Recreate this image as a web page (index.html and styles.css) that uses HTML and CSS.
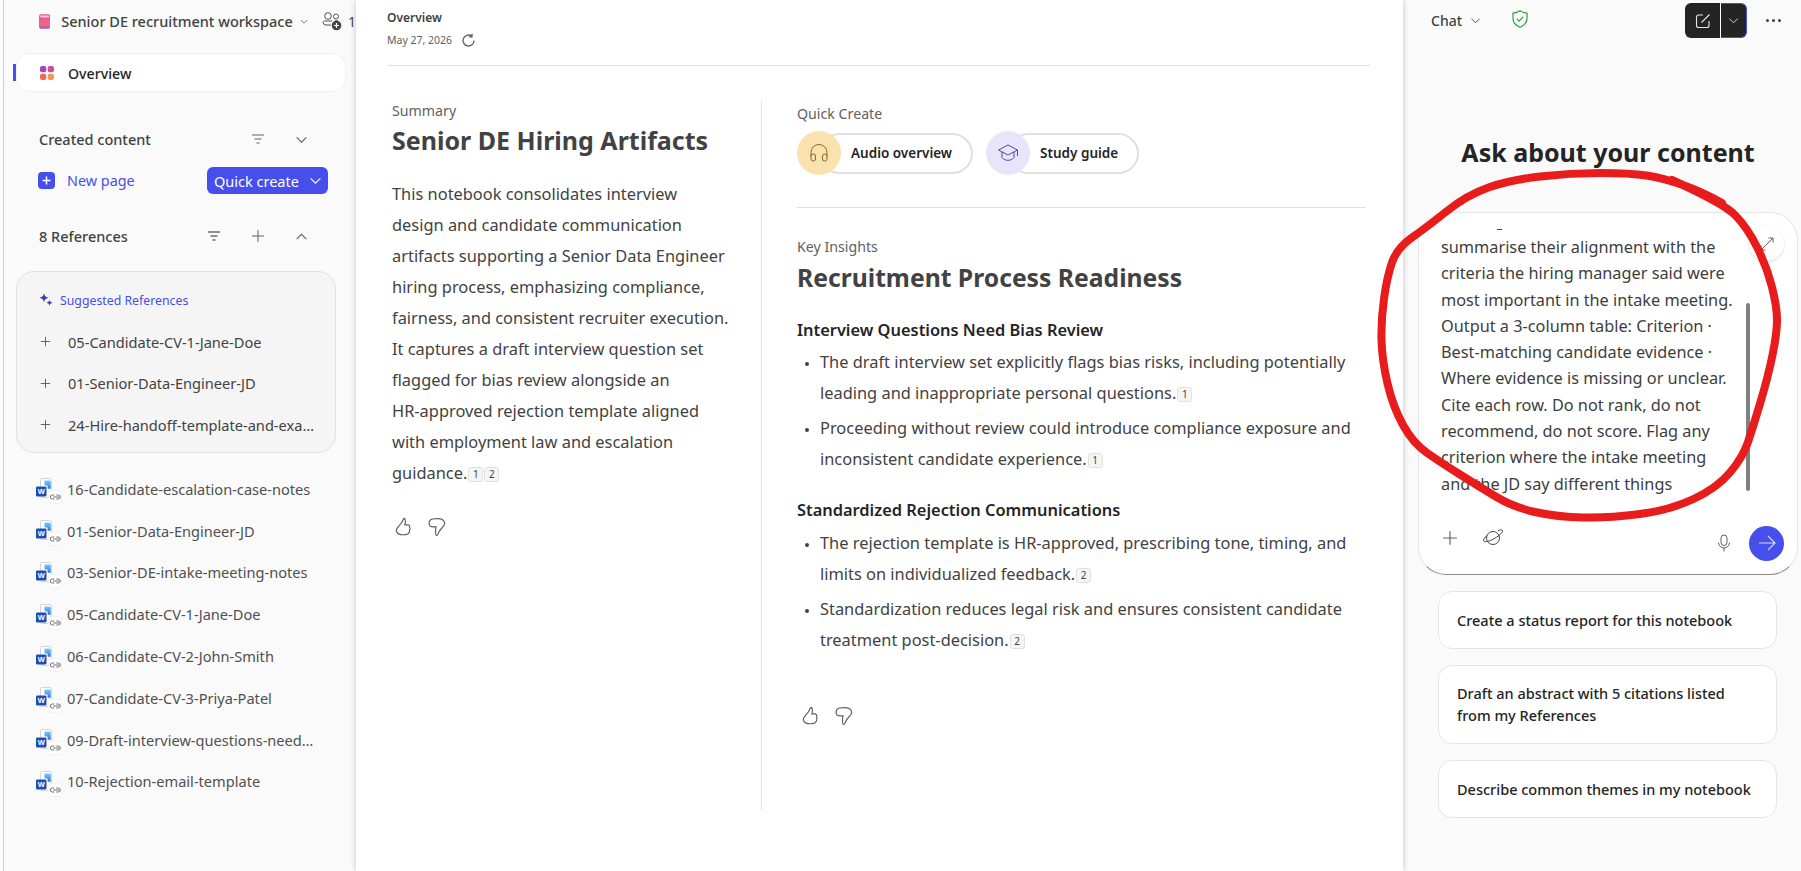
FILE: index.html
```html
<!DOCTYPE html>
<html lang="en">
<head>
    <meta charset="UTF-8">
    <meta name="viewport" content="width=device-width, initial-scale=1.0">
    <title>Senior DE recruitment workspace</title>
    <link rel="stylesheet" href="styles.css">
</head>
<body>
    <svg width="0" height="0" class="defs">
        <defs>
            <linearGradient id="bookFill" x1="0" y1="0" x2="0" y2="1">
                <stop offset="0" stop-color="#f04f9a"/>
                <stop offset="0.75" stop-color="#f0697a"/>
                <stop offset="1" stop-color="#8a55d8"/>
            </linearGradient>
            <linearGradient id="cornerFill" x1="0" y1="0" x2="0" y2="1">
                <stop offset="0" stop-color="#6fd0fb"/>
                <stop offset="1" stop-color="#2f6fe8"/>
            </linearGradient>
            <symbol id="chevDown" viewBox="0 0 12 12"><path d="M1.500 4 6 8.500 10.500 4" fill="none" stroke="currentColor" stroke-width="1"/></symbol>
            <symbol id="chevUp" viewBox="0 0 12 12"><path d="M1.500 8.500 6 4l4.500 4.500" fill="none" stroke="currentColor" stroke-width="1"/></symbol>
            <symbol id="filter" viewBox="0 0 12 10"><path d="M0 1h12M2.500 5h7M4.500 9h3" fill="none" stroke="currentColor" stroke-width="1"/></symbol>
            <symbol id="plus" viewBox="0 0 14 14"><path d="M7 1v12M1 7h12" fill="none" stroke="currentColor" stroke-width="1"/></symbol>
            <symbol id="thumbUp" viewBox="0 0 20 20"><path d="M10.200 2.200c-1.300-.4-1.500 1-1.900 2.100-.6 1.700-1.800 3.200-3.600 5.200-1.800 1.900-3 3-2.400 5 .6 2.200 3.200 3.400 6.700 3.400 2.300 0 4.500-.2 5.200-2 .6-.5.8-1.500.5-2.200.7-.7.7-2.100.1-2.800.5-1.300-.5-2.400-1.700-2.400h-2.800c.6-1.700.8-5.400-.1-5.300z" fill="none" stroke="currentColor" stroke-width="1.100"/></symbol>
            <symbol id="thumbDown" viewBox="0 0 20 20"><path d="M9.800 18.500c1.300.3 1.500-1 1.900-2.100.6-1.700 1.800-3.200 3.600-5.200 1.800-1.900 3-3 2.400-5-.6-2.200-3.200-3.700-6.700-3.700-2.600 0-6 0-7 1.500-1 1.400-1.300 3.800-.5 5.100.8 1.200 2.400 1.300 4 1.300h2c-.6 1.800-.6 7.900.3 8.100z" fill="none" stroke="currentColor" stroke-width="1.100"/></symbol>
            <symbol id="wordDoc" viewBox="0 0 26 26">
                <path d="M4.500 1.500A1.500 1.500 0 0 1 6 .5h7.500A2 2 0 0 1 15.500 2.500v15a2 2 0 0 1-2 2H6a1.500 1.500 0 0 1-1.500-1.500z" fill="#fff" stroke="#c8c8c8" stroke-width=".8"/>
                <path d="M8.500 2.500h5a1.200 1.200 0 0 1 1.200 1.200v7h-1.700c-1 0-1.500-.5-1.500-1.500V7.500H10c-1 0-1.500-.5-1.500-1.500z" fill="url(#cornerFill)"/>
                <rect x="0" y="8.500" width="10.500" height="10" rx="1.300" fill="#1b4fb5"/>
                <text x="5.200" y="16.300" class="w-mark">W</text>
                <rect x="12.500" y="12.500" width="13" height="13" rx="2.500" fill="#fff" stroke="#ececec" stroke-width=".7"/>
                <path d="M18 17h-2a2 2 0 0 0 0 4h2M20 17h2a2 2 0 0 1 0 4h-2M16.800 19h6.400" transform="translate(.3 0)" fill="none" stroke="#616161" stroke-width=".9"/>
            </symbol>
        </defs>
    </svg>

    <div class="app">
        <aside class="sidebar">
            <div class="workspace">
                <svg class="book" viewBox="0 0 14 18" width="15" height="19">
                    <rect width="14" height="18" rx="2.500" fill="url(#bookFill)"/>
                    <rect x="1.500" y="1.500" width="11" height="2.500" rx="1" fill="#fbc4d8"/>
                </svg>
                <span class="workspace-name">Senior DE recruitment workspace</span>
                <svg class="workspace-chev"><use href="#chevDown"/></svg>
                <svg class="people" viewBox="0 0 20 20" width="20" height="20">
                    <circle cx="6" cy="5" r="3.300" fill="none" stroke="#555" stroke-width="1"/>
                    <circle cx="14" cy="5.500" r="2.500" fill="none" stroke="#555" stroke-width="1"/>
                    <path d="M9 14H4a3 3 0 0 1-3-2.500c0-1 .8-1.500 1.800-1.500H10M13 9.800h3" fill="none" stroke="#555" stroke-width="1"/>
                    <circle cx="14.500" cy="14.500" r="4.800" fill="#444"/>
                    <path d="M14.500 12v5M12 14.500h5" stroke="#fff" stroke-width="1.200"/>
                </svg>
                <span class="people-count">1</span>
            </div>

            <div class="nav-item">
                <svg viewBox="0 0 14 14" width="14" height="14">
                    <rect width="6.300" height="6.300" rx="2" fill="#a943b9"/>
                    <rect x="7.700" width="6.300" height="6.300" rx="2" fill="#c4509e"/>
                    <rect y="7.700" width="6.300" height="6.300" rx="2" fill="#ee6a5c"/>
                    <rect x="7.700" y="7.700" width="6.300" height="6.300" rx="2" fill="#f4965c"/>
                </svg>
                <span>Overview</span>
            </div>

            <div class="section-head created">
                <span class="section-title">Created content</span>
                <span class="slot"><svg class="icon-filter"><use href="#filter"/></svg></span>
                <span class="slot"><svg class="icon-chev"><use href="#chevDown"/></svg></span>
            </div>

            <div class="create-row">
                <span class="new-box"><svg width="9" height="9" viewBox="0 0 9 9"><path d="M4.500 .5v8M.5 4.500h8" stroke="#fff" stroke-width="1.500"/></svg></span>
                <span class="new-page">New page</span>
                <button class="quick-btn">Quick create <svg class="icon-chev"><use href="#chevDown"/></svg></button>
            </div>

            <div class="section-head references">
                <span class="section-title">8 References</span>
                <span class="slot"><svg class="icon-filter strong"><use href="#filter"/></svg></span>
                <span class="slot"><svg class="icon-plus"><use href="#plus"/></svg></span>
                <span class="slot"><svg class="icon-chev"><use href="#chevUp"/></svg></span>
            </div>

            <div class="suggested">
                <div class="suggested-head">
                    <svg width="14" height="14" viewBox="0 0 14 14"><path d="M5 0c.5 3 1.500 4 4.500 4.700C6.500 5.500 5.500 6.500 5 9.500 4.500 6.500 3.500 5.500.5 4.700 3.500 4 4.500 3 5 0zM10.500 6.500c.3 2 1 2.800 3.200 3.200-2.200.4-2.900 1.200-3.200 3.300-.3-2.100-1-2.900-3.200-3.300 2.200-.4 2.900-1.200 3.200-3.200z" fill="#3b3fb8"/></svg>
                    <span>Suggested References</span>
                </div>
                <div class="suggested-row"><svg class="icon-add"><use href="#plus"/></svg><span class="file-name">05-Candidate-CV-1-Jane-Doe</span></div>
                <div class="suggested-row"><svg class="icon-add"><use href="#plus"/></svg><span class="file-name">01-Senior-Data-Engineer-JD</span></div>
                <div class="suggested-row"><svg class="icon-add"><use href="#plus"/></svg><span class="file-name">24-Hire-handoff-template-and-exa…</span></div>
            </div>

            <ul class="ref-list">
                <li><svg class="doc"><use href="#wordDoc"/></svg><span class="file-name">16-Candidate-escalation-case-notes</span></li>
                <li><svg class="doc"><use href="#wordDoc"/></svg><span class="file-name">01-Senior-Data-Engineer-JD</span></li>
                <li><svg class="doc"><use href="#wordDoc"/></svg><span class="file-name">03-Senior-DE-intake-meeting-notes</span></li>
                <li><svg class="doc"><use href="#wordDoc"/></svg><span class="file-name">05-Candidate-CV-1-Jane-Doe</span></li>
                <li><svg class="doc"><use href="#wordDoc"/></svg><span class="file-name">06-Candidate-CV-2-John-Smith</span></li>
                <li><svg class="doc"><use href="#wordDoc"/></svg><span class="file-name">07-Candidate-CV-3-Priya-Patel</span></li>
                <li><svg class="doc"><use href="#wordDoc"/></svg><span class="file-name">09-Draft-interview-questions-need…</span></li>
                <li><svg class="doc"><use href="#wordDoc"/></svg><span class="file-name">10-Rejection-email-template</span></li>
            </ul>
        </aside>

        <main class="main">
            <header class="main-head">
                <div class="page-title">Overview</div>
                <div class="page-date">
                    <span>May 27, 2026</span>
                    <svg width="15" height="15" viewBox="0 0 15 15"><path d="M13 7.500A5.500 5.500 0 1 1 10.500 2.900M11 .8v3h-3" fill="none" stroke="#616161" stroke-width="1.300"/></svg>
                </div>
            </header>

            <div class="columns">
                <section class="summary">
                    <div class="eyebrow">Summary</div>
                    <h1>Senior DE Hiring Artifacts</h1>
                    <p class="summary-text">This notebook consolidates interview<br>
                    design and candidate communication<br>
                    artifacts supporting a Senior Data Engineer<br>
                    hiring process, emphasizing compliance,<br>
                    fairness, and consistent recruiter execution.<br>
                    It captures a draft interview question set<br>
                    flagged for bias review alongside an<br>
                    HR-approved rejection template aligned<br>
                    with employment law and escalation<br>
                    guidance.<span class="cite">1</span><span class="cite">2</span></p>
                    <div class="thumbs first"><svg><use href="#thumbUp"/></svg><svg><use href="#thumbDown"/></svg></div>
                </section>

                <section class="insights">
                    <div class="quick">
                        <div class="eyebrow">Quick Create</div>
                        <div class="chips">
                            <div class="chip">
                                <span class="chip-icon audio">
                                    <svg width="20" height="20" viewBox="0 0 20 20"><path d="M2 13V9.500a8 8 0 0 1 16 0V13" fill="none" stroke="#8a6420" stroke-width="1"/><rect x="2" y="11" width="4.500" height="7" rx="2" fill="none" stroke="#8a6420"/><rect x="13.500" y="11" width="4.500" height="7" rx="2" fill="none" stroke="#8a6420"/></svg>
                                </span>
                                <span class="chip-label">Audio overview</span>
                            </div>
                            <div class="chip">
                                <span class="chip-icon study">
                                    <svg width="22" height="20" viewBox="0 0 22 20"><path d="M11 2 1.500 7 11 12l9.500-5zM5 9v5.500c1.500 2 3.800 2.800 6 2.800s4.500-.8 6-2.800V9M20.500 7v6" fill="none" stroke="#4f4a9e" stroke-width="1"/></svg>
                                </span>
                                <span class="chip-label">Study guide</span>
                            </div>
                        </div>
                    </div>

                    <div class="eyebrow key">Key Insights</div>
                    <h1>Recruitment Process Readiness</h1>

                    <h3 class="first-topic">Interview Questions Need Bias Review</h3>
                    <ul class="points">
                        <li>The draft interview set explicitly flags bias risks, including potentially<br>leading and inappropriate personal questions.<span class="cite">1</span></li>
                        <li>Proceeding without review could introduce compliance exposure and<br>inconsistent candidate experience.<span class="cite">1</span></li>
                    </ul>

                    <h3 class="second-topic">Standardized Rejection Communications</h3>
                    <ul class="points">
                        <li>The rejection template is HR-approved, prescribing tone, timing, and<br>limits on individualized feedback.<span class="cite">2</span></li>
                        <li>Standardization reduces legal risk and ensures consistent candidate<br>treatment post-decision.<span class="cite">2</span></li>
                    </ul>
                    <div class="thumbs second"><svg><use href="#thumbUp"/></svg><svg><use href="#thumbDown"/></svg></div>
                </section>
            </div>
        </main>

        <aside class="chat">
            <div class="chat-bar">
                <span class="chat-label">Chat</span>
                <svg class="chat-chev"><use href="#chevDown"/></svg>
                <svg class="shield" viewBox="0 0 16 18" width="16" height="18"><path d="M8 .8c2 1.500 4 2.200 7 2.400v5.300c0 4-2.500 6.800-7 8.700-4.500-1.900-7-4.700-7-8.700V3.200C4 3 6 2.300 8 .8z" fill="none" stroke="#2f9e3f" stroke-width="1.200"/><path d="m4.800 8.800 2.300 2.300 4.200-4.500" fill="none" stroke="#2f9e3f" stroke-width="1.100"/></svg>
                <div class="new-chat">
                    <span class="new-chat-main">
                        <svg width="16" height="16" viewBox="0 0 16 16"><path d="M8 2H3.500A2 2 0 0 0 1.500 4v8.500a2 2 0 0 0 2 2H12a2 2 0 0 0 2-2V8M6.500 9.500 14.500 1.500" fill="none" stroke="#e6e6e6" stroke-width="1.100"/></svg>
                    </span>
                    <span class="new-chat-menu"><svg width="11" height="11"><use href="#chevDown"/></svg></span>
                </div>
                <span class="more"><i></i><i></i><i></i></span>
            </div>

            <h2 class="chat-title">Ask about your content</h2>

            <div class="prompt">
                <div class="prompt-text">
                    <div class="clip-mark"></div>
                    summarise their alignment with the<br>
                    criteria the hiring manager said were<br>
                    most important in the intake meeting.<br>
                    Output a 3-column table: Criterion ·<br>
                    Best-matching candidate evidence ·<br>
                    Where evidence is missing or unclear.<br>
                    Cite each row. Do not rank, do not<br>
                    recommend, do not score. Flag any<br>
                    criterion where the intake meeting<br>
                    and the JD say different things
                </div>
                <span class="scrollbar"></span>
                <span class="expand">
                    <svg width="14" height="14" viewBox="0 0 14 14"><path d="M8.500 1H13v4.500M13 1 1 13M1 8.500V13h4.500" fill="none" stroke="#616161" stroke-width="1"/></svg>
                </span>
                <div class="prompt-tools">
                    <svg class="tool-plus"><use href="#plus"/></svg>
                    <svg class="tool-planet" viewBox="0 0 22 18" width="22" height="18"><circle cx="11" cy="9" r="6.500" fill="none" stroke="#424242" stroke-width="1"/><path d="M5 6.500C2.500 8.500 1 10.500 1.800 12c1 1.500 6 .3 11-2.700s8.500-6.300 7.700-7.800c-.5-1-2.500-.9-4.700.2" fill="none" stroke="#424242" stroke-width="1"/></svg>
                    <svg class="tool-mic" viewBox="0 0 14 18" width="14" height="18"><rect x="4" y="1" width="6" height="10.500" rx="3" fill="none" stroke="#616161" stroke-width="1"/><path d="M1.500 8.500a5.500 5.500 0 0 0 11 0M7 14v3.500" fill="none" stroke="#616161" stroke-width="1"/></svg>
                    <span class="send"><svg width="18" height="16" viewBox="0 0 18 16"><path d="M1 8h16M10 1l7 7-7 7" fill="none" stroke="#d9d9ff" stroke-width="1.100"/></svg></span>
                </div>
            </div>

            <div class="suggestions">
                <div class="suggestion">Create a status report for this notebook</div>
                <div class="suggestion two-line">Draft an abstract with 5 citations listed<br>from my References</div>
                <div class="suggestion">Describe common themes in my notebook</div>
            </div>
        </aside>
    </div>

    <svg class="scribble" width="1801" height="871" viewBox="0 0 1801 871">
        <path d="M1672 180Q1723 203 1735 215Q1747 227 1757 247Q1767 267 1772 287Q1777 307 1777 320Q1777 333 1772.500 355Q1768 377 1760.500 402Q1753 427 1748 442Q1743 457 1730 472.500Q1717 488 1693.500 499Q1670 510 1640 514Q1610 518 1583.500 517.500Q1557 517 1535 512Q1513 507 1496.500 497Q1480 487 1460 474.500Q1440 462 1426.500 452.500Q1413 443 1403 425Q1393 407 1387.500 383.500Q1382 360 1381.500 340Q1381 320 1384 298.500Q1387 277 1392 262.500Q1397 248 1412 237.500Q1427 227 1447 211Q1467 195 1488.500 187.500Q1510 180 1540 176.500Q1570 173 1600 173Q1630 173 1646.500 175.500Q1663 178 1683 185Q1703 192 1722 203" fill="none" stroke="#e81c1c" stroke-width="8" stroke-linecap="round"/>
    </svg>
</body>
</html>
```

FILE: styles.css
```css
* {
    box-sizing: border-box;
}
html, body {
    margin: 0;
    padding: 0;
    height: 100%;
    overflow: hidden;
}
body {
    font-family: "Noto Sans", "Open Sans", sans-serif;
    background-color: #fff;
    color: #424242;
    position: relative;
}
.defs {
    position: absolute;
}
.w-mark {
    font-family: "Liberation Sans", sans-serif;
    font-size: 7.5px;
    font-weight: 700;
    fill: #fff;
    text-anchor: middle;
}
.app {
    display: flex;
    height: 871px;
    padding-left: 3px;
}

/* left rail */
.sidebar {
    width: 353px;
    flex: none;
    background-color: #fafafa;
    border-left: 1px solid #d1d1d1;
    overflow: hidden;
}
.workspace {
    display: flex;
    align-items: center;
    height: 42px;
    padding-left: 35px;
    white-space: nowrap;
}
.workspace-name {
    margin-left: 11px;
    font-size: 14.5px;
    font-weight: 500;
}
.workspace-chev {
    width: 11px;
    height: 11px;
    margin-left: 7px;
    color: #424242;
}
.people {
    margin-left: 14px;
    flex: none;
}
.people-count {
    margin-left: 6px;
    font-size: 14px;
}
.nav-item {
    position: relative;
    display: flex;
    align-items: center;
    width: 330px;
    height: 39px;
    margin: 11px 0 0 12px;
    padding: 1px 0 0 23px;
    background: #fff;
    border: 1px solid #f0f0f0;
    border-radius: 14px;
    color: #242424;
    font-size: 14.2px;
    font-weight: 500;
}
.nav-item span {
    margin-left: 14px;
}
.nav-item::before {
    content: "";
    position: absolute;
    left: -4px;
    top: 10px;
    width: 3px;
    height: 17px;
    background: #464feb;
}
.section-head {
    display: flex;
    align-items: center;
    height: 24px;
    padding: 0 33px 0 35px;
}
.section-title {
    flex: 1;
    font-size: 14.5px;
    font-weight: 500;
}
.slot {
    display: flex;
    justify-content: center;
    width: 43.5px;
    color: #616161;
}
.created {
    margin-top: 35px;
}
.references {
    margin-top: 30px;
}
.icon-filter {
    width: 12px;
    height: 10px;
}
.icon-filter.strong {
    color: #242424;
}
.icon-chev {
    width: 13px;
    height: 13px;
}
.icon-plus {
    width: 14px;
    height: 14px;
}
.create-row {
    display: flex;
    align-items: center;
    height: 27px;
    margin-top: 16px;
    padding-left: 34px;
}
.new-box {
    display: flex;
    align-items: center;
    justify-content: center;
    width: 17px;
    height: 17px;
    background: #464feb;
    border-radius: 4px;
}
.new-page {
    margin-left: 12px;
    font-size: 14.4px;
    color: #464feb;
}
.quick-btn {
    display: flex;
    align-items: center;
    justify-content: space-between;
    width: 121px;
    height: 27px;
    margin-left: auto;
    margin-right: 28px;
    padding: 0 6px 0 7px;
    background: #464feb;
    border: 0;
    border-radius: 6px;
    color: #fff;
    font-family: inherit;
    font-size: 14.5px;
    white-space: nowrap;
}
.suggested {
    width: 320px;
    height: 182px;
    margin: 23px 0 0 12px;
    padding: 19px 0 0 22px;
    background: #f5f5f5;
    border: 1px solid #e0e0e0;
    border-radius: 18px;
}
.suggested-head {
    display: flex;
    align-items: center;
    height: 18px;
    font-size: 12.3px;
    color: #464feb;
}
.suggested-head span {
    margin-left: 7px;
}
.suggested-row {
    display: flex;
    align-items: center;
    height: 41.5px;
    white-space: nowrap;
}
.suggested-head + .suggested-row {
    margin-top: 12px;
}
.icon-add {
    width: 11px;
    height: 11px;
    margin-left: 1px;
    margin-right: 17px;
    color: #424242;
}
.file-name {
    font-size: 14.6px;
    white-space: nowrap;
}
.ref-list {
    list-style: none;
    margin: 15px 0 0;
    padding: 0 0 0 32px;
}
.ref-list li {
    display: flex;
    align-items: center;
    height: 41.8px;
}
.ref-list .file-name {
    margin-left: 5px;
    color: #505050;
}
.doc {
    width: 26px;
    height: 26px;
    flex: none;
    margin-top: 5px;
}

/* center */
.main {
    position: relative;
    z-index: 1;
    width: 1047px;
    flex: none;
    padding: 0 33px 0 31px;
    background: #fff;
    box-shadow: 0 0 6px rgba(0, 0, 0, 0.22);
}
.main-head {
    height: 66px;
    padding-top: 10px;
    border-bottom: 1px solid #e0e0e0;
}
.page-title {
    font-size: 12px;
    font-weight: 600;
    line-height: 16px;
}
.page-date {
    display: flex;
    align-items: center;
    gap: 9px;
    margin-top: 6px;
    font-size: 10.5px;
    line-height: 16px;
    color: #616161;
}
.columns {
    display: flex;
    margin-top: 35px;
    height: 709px;
}
.summary {
    width: 375px;
    flex: none;
    padding: 1px 0 0 5px;
    border-right: 1px solid #e0e0e0;
}
.eyebrow {
    font-size: 14.2px;
    line-height: 18px;
    color: #616161;
}
h1 {
    margin: 4px 0 0;
    font-size: 25px;
    font-weight: 700;
    line-height: 32px;
    color: #424242;
}
.insights h1 {
    margin-top: 6px;
    font-size: 24.7px;
}
.summary-text {
    margin: 22px 0 0;
    font-size: 16.4px;
    line-height: 31px;
}
.cite {
    display: inline-block;
    width: 15px;
    height: 15px;
    margin-left: 1px;
    background: #f5f5f5;
    border: 1px solid #e0e0e0;
    border-radius: 3px;
    font-size: 10px;
    line-height: 13px;
    text-align: center;
    vertical-align: 1px;
}
.thumbs {
    display: flex;
    gap: 11px;
    color: #616161;
}
.thumbs svg {
    width: 21px;
    height: 21px;
}
.thumbs.first {
    margin: 28px 0 0 2px;
}
.thumbs.second {
    margin: 50px 0 0 4px;
}
.insights {
    flex: 1;
    padding: 4px 0 0 35px;
}
.quick {
    margin-right: 4px;
    padding-bottom: 32px;
    border-bottom: 1px solid #e0e0e0;
}
.chips {
    display: flex;
    gap: 13px;
    margin-top: 8px;
}
.chip {
    display: flex;
    align-items: center;
}
.chip-icon {
    position: relative;
    z-index: 1;
    display: flex;
    align-items: center;
    justify-content: center;
    width: 44px;
    height: 44px;
    border-radius: 50%;
}
.chip-icon.audio {
    background: #f9e2ae;
}
.chip-icon.study {
    background: #e8e4fa;
}
.chip-label {
    display: flex;
    align-items: center;
    height: 41px;
    margin-left: -22px;
    padding: 0 19px 0 30px;
    border: 2.5px solid #e0e0e0;
    border-radius: 21px;
    font-size: 13.5px;
    font-weight: 600;
    color: #242424;
    white-space: nowrap;
}
.eyebrow.key {
    margin-top: 30px;
}
h3 {
    margin: 0;
    font-size: 16.4px;
    font-weight: 600;
    line-height: 22px;
    color: #242424;
}
.first-topic {
    margin-top: 25px;
}
.second-topic {
    margin-top: 24.5px;
}
.points {
    margin: 5px 0 0;
    padding-left: 23px;
    font-size: 16.4px;
    line-height: 31px;
}
.second-topic + .points {
    margin-top: 6.5px;
}
.points li + li {
    margin-top: 4px;
}
.points li::marker {
    font-size: 12px;
}

/* right panel */
.chat {
    flex: 1;
    background: #fafafa;
}
.chat-bar {
    display: flex;
    align-items: center;
    height: 38px;
    padding: 3px 20px 0 28px;
}
.chat-label {
    font-size: 14px;
    font-weight: 500;
}
.chat-chev {
    width: 11px;
    height: 11px;
    margin-left: 8px;
}
.shield {
    margin: -3px 0 0 31px;
}
.new-chat {
    display: flex;
    height: 35px;
    margin-left: auto;
    margin-right: -1px;
    color: #e6e6e6;
}
.new-chat-main {
    display: flex;
    align-items: center;
    justify-content: center;
    width: 36px;
    background: #242424;
    border-radius: 6px 0 0 6px;
    border-right: 1px solid #fff;
}
.new-chat-menu {
    display: flex;
    align-items: center;
    justify-content: center;
    width: 26px;
    background: #242424;
    border: 1px solid #464feb;
    border-left: 0;
    border-radius: 0 6px 6px 0;
}
.more {
    display: flex;
    gap: 3px;
    margin-left: 20px;
}
.more i {
    width: 3px;
    height: 3px;
    background: #424242;
    border-radius: 50%;
}
.chat-title {
    margin: 97px 0 0;
    padding-left: 12px;
    font-size: 25px;
    font-weight: 700;
    line-height: 34px;
    text-align: center;
    color: #242424;
}
.prompt {
    position: relative;
    width: 380px;
    height: 363px;
    margin: 43px 0 0 15px;
    background: #fff;
    border: 1px solid #e5e5e5;
    border-bottom-color: #8a8a8a;
    border-radius: 28px;
}
.prompt-text {
    height: 267px;
    margin-top: 16px;
    padding-left: 22px;
    overflow: hidden;
    font-size: 16.3px;
    line-height: 26.3px;
    white-space: nowrap;
    color: #3d3d3d;
}
.clip-mark {
    width: 5px;
    height: 1px;
    margin: 0 0 4px 56px;
    background: #424242;
}
.scrollbar {
    position: absolute;
    left: 327px;
    top: 90px;
    width: 4px;
    height: 188px;
    background: #808080;
    border-radius: 2px;
}
.expand {
    position: absolute;
    right: 13px;
    top: 13px;
    display: flex;
    align-items: center;
    justify-content: center;
    width: 35px;
    height: 35px;
    background: #fff;
    border-radius: 50%;
    box-shadow: 0 1px 3px rgba(0, 0, 0, 0.15);
}
.prompt-tools {
    display: flex;
    align-items: center;
    height: 78px;
    padding: 16px 13px 0 23px;
}
.tool-plus {
    width: 16px;
    height: 16px;
    color: #616161;
    margin-top: -10px;
}
.tool-planet {
    margin: -10px 0 0 24px;
}
.tool-mic {
    margin-left: auto;
}
.send {
    display: flex;
    align-items: center;
    justify-content: center;
    width: 35px;
    height: 35px;
    margin-left: 18px;
    background: #464feb;
    border-radius: 50%;
}
.suggestions {
    display: flex;
    flex-direction: column;
    gap: 16px;
    width: 339px;
    margin: 16px 0 0 35px;
}
.suggestion {
    display: flex;
    align-items: center;
    min-height: 58px;
    padding: 0 18px;
    background: #fff;
    border: 1px solid #e5e5e5;
    border-radius: 14px;
    font-size: 14.5px;
    font-weight: 500;
    line-height: 22px;
    color: #242424;
    white-space: nowrap;
}
.suggestion.two-line {
    min-height: 79px;
    padding-bottom: 2px;
}

/* hand drawn ring on top of the screenshot */
.scribble {
    position: absolute;
    left: 0;
    top: 0;
    pointer-events: none;
    z-index: 5;
}
```
